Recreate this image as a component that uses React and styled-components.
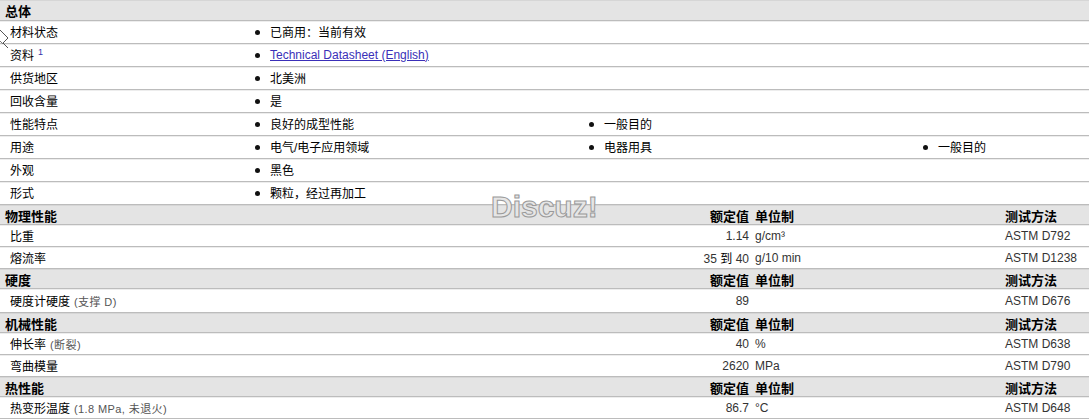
import React from 'react';
import styled, { createGlobalStyle } from 'styled-components';

const Global = createGlobalStyle`
  html, body { margin: 0; padding: 0; background: #fff; }
  body {
    font-family: "Liberation Sans", Arial, "Noto Sans CJK SC", sans-serif;
    font-size: 12px;
    color: #000;
  }
`;

const Page = styled.div`
  position: relative;
  width: 1089px;
  overflow: hidden;
`;

const PROP_COLS = '1fr 100px 256px 84px';

const SectionHeader = styled.div`
  display: grid;
  grid-template-columns: ${(p) => (p.$props ? PROP_COLS : '1fr')};
  align-items: center;
  height: ${(p) => (p.$props ? 20 : 21)}px;
  box-sizing: border-box;
  background: #e4e4e4;
  border-top: 1px solid #d6d6d6;
  border-bottom: 1px solid #bcbcbc;
  font-family: "Liberation Sans", Arial, "Noto Sans CJK SC", sans-serif;
  font-weight: bold;
  font-size: 13px;
  color: #000;
`;

const HeadCell = styled.div`
  padding-left: ${(p) => p.$pl || 0}px;
  text-align: ${(p) => p.$align || 'left'};
  white-space: nowrap;
`;

const GeneralRow = styled.div`
  display: grid;
  grid-template-columns: 250px 334px 334px 1fr;
  align-items: center;
  height: 23px;
  padding-bottom: 2px;
  box-sizing: border-box;
  border-top: 1px solid #ededed;
  border-bottom: 1px solid #bcbcbc;
`;

const PropRow = styled.div`
  display: grid;
  grid-template-columns: ${PROP_COLS};
  align-items: center;
  height: ${(p) => (p.$tall ? 24 : 22)}px;
  padding-bottom: 1px;
  box-sizing: border-box;
  border-top: 1px solid #ededed;
  border-bottom: 1px solid #bcbcbc;
`;

const Label = styled.div`
  padding-left: 10px;
  white-space: nowrap;
  color: #000;
`;

const Note = styled.span`
  margin-left: 4px;
  font-size: 11px;
  color: #555;
  letter-spacing: 0.4px;
`;

const Sup = styled.sup`
  font-size: 9px;
  color: #3333aa;
  margin-left: 4px;
  vertical-align: 5px;
  line-height: 0;
`;

const ValueCell = styled.div`
  display: flex;
  align-items: center;
  padding-left: 5px;
  white-space: nowrap;
`;

const Dot = styled.span`
  display: inline-block;
  width: 5px;
  height: 5px;
  border-radius: 50%;
  background: #111;
  margin-right: 10px;
  margin-top: 1px;
`;

const Link = styled.a`
  color: #3a2fb8;
  text-decoration: underline;
`;

const Num = styled.div`
  text-align: right;
  color: #333;
  white-space: nowrap;
`;

const Unit = styled.div`
  padding-left: 6px;
  color: #333;
  white-space: nowrap;
`;

const Method = styled.div`
  color: #333;
  white-space: nowrap;
`;

const Black = styled.span`
  color: #000;
`;

const Watermark = styled.div`
  position: absolute;
  left: 491px;
  top: 190px;
  font-family: "Liberation Sans", Arial, sans-serif;
  font-weight: bold;
  font-size: 30px;
  color: #e6e6e6;
  -webkit-text-stroke: 1px #999;
  pointer-events: none;
`;

const Cursor = styled.svg`
  position: absolute;
  left: 0;
  top: 28px;
`;

const general = [
  { label: '材料状态', values: ['已商用：当前有效'] },
  { label: '资料', sup: '1', link: 'Technical Datasheet (English)' },
  { label: '供货地区', values: ['北美洲'] },
  { label: '回收含量', values: ['是'] },
  { label: '性能特点', values: ['良好的成型性能', '一般目的'] },
  { label: '用途', values: ['电气/电子应用领域', '电器用具', '一般目的'] },
  { label: '外观', values: ['黑色'] },
  { label: '形式', values: ['颗粒，经过再加工'] },
];

const sections = [
  {
    title: '物理性能',
    rows: [
      { label: '比重', value: '1.14', unit: 'g/cm³', method: 'ASTM D792' },
      { label: '熔流率', range: ['35', '40'], unit: 'g/10 min', method: 'ASTM D1238' },
    ],
  },
  {
    title: '硬度',
    rows: [{ label: '硬度计硬度', note: '(支撑 D)', value: '89', unit: '', method: 'ASTM D676', tall: true }],
  },
  {
    title: '机械性能',
    rows: [
      { label: '伸长率', note: '(断裂)', value: '40', unit: '%', method: 'ASTM D638' },
      { label: '弯曲模量', value: '2620', unit: 'MPa', method: 'ASTM D790' },
    ],
  },
  {
    title: '热性能',
    rows: [
      { label: '热变形温度', note: '(1.8 MPa, 未退火)', value: '86.7', unit: '°C', method: 'ASTM D648' },
    ],
  },
];

export default function App() {
  return (
    <Page>
      <Global />
      <SectionHeader>
        <HeadCell $pl={5}>总体</HeadCell>
      </SectionHeader>
      {general.map((r) => (
        <GeneralRow key={r.label}>
          <Label>
            {r.label}
            {r.sup && <Sup>{r.sup}</Sup>}
          </Label>
          {r.link ? (
            <ValueCell>
              <Dot />
              <Link href="#">{r.link}</Link>
            </ValueCell>
          ) : (
            r.values.map((v, i) => (
              <ValueCell key={i}>
                <Dot />
                {v}
              </ValueCell>
            ))
          )}
        </GeneralRow>
      ))}
      {sections.map((s) => (
        <React.Fragment key={s.title}>
          <SectionHeader $props>
            <HeadCell $pl={5}>{s.title}</HeadCell>
            <HeadCell $align="right">额定值</HeadCell>
            <HeadCell $pl={6}>单位制</HeadCell>
            <HeadCell>测试方法</HeadCell>
          </SectionHeader>
          {s.rows.map((r) => (
            <PropRow key={r.label} $tall={r.tall}>
              <Label>
                {r.label}
                {r.note && <Note>{r.note}</Note>}
              </Label>
              <Num>
                {r.range ? (
                  <>
                    {r.range[0]} <Black>到</Black> {r.range[1]}
                  </>
                ) : (
                  r.value
                )}
              </Num>
              <Unit>{r.unit}</Unit>
              <Method>{r.method}</Method>
            </PropRow>
          ))}
        </React.Fragment>
      ))}
      <Watermark>Discuz!</Watermark>
      <Cursor width="12" height="24" viewBox="0 0 12 24">
        <polyline points="0,2 8,10 3,15 8,20" fill="none" stroke="#555" strokeWidth="1" />
        <polyline points="0,13 3,16" fill="none" stroke="#777" strokeWidth="1" />
      </Cursor>
    </Page>
  );
}
